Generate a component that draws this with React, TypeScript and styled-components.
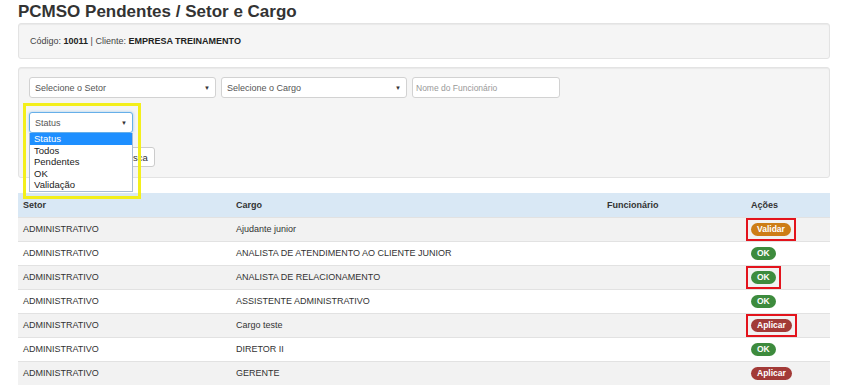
import React from 'react'
import styled, { createGlobalStyle, css } from 'styled-components'

const GlobalStyle = createGlobalStyle`
  * {
    box-sizing: border-box;
  }
  body {
    margin: 0;
    background: #fff;
    color: #333;
    font-family: 'Liberation Sans', Arial, sans-serif;
  }
`

type Tone = 'validar' | 'ok' | 'aplicar'

const tones: Record<Tone, string> = {
  validar: '#cd7d16',
  ok: '#3d8b3d',
  aplicar: '#a23a37',
}

const wellStyle = css`
  background: #f5f5f5;
  border: 1px solid #e3e3e3;
  border-radius: 3px;
  box-shadow: inset 0 1px 1px rgba(0, 0, 0, 0.05);
`

const Page = styled.div`
  width: 849px;
  padding: 2px 19px 0 18px;
`

const Title = styled.h2`
  margin: 0 0 1px;
  font-size: 17px;
  line-height: 20px;
  font-weight: bold;
  color: #333;
`

const InfoWell = styled.div`
  ${wellStyle}
  height: 36px;
  display: flex;
  align-items: center;
  padding: 0 11px;
  font-size: 9px;
  color: #444;

  b {
    color: #222;
  }
`

const FilterWell = styled.div`
  ${wellStyle}
  position: relative;
  margin-top: 8px;
  padding: 9px 10px 10px;
  display: flex;
  flex-direction: column;
`

const FilterRow = styled.div<{ $offset?: number }>`
  display: flex;
  gap: 5px;
  margin-top: ${p => p.$offset ?? 0}px;
`

const SelectBox = styled.div<{ $width: number; $focused?: boolean }>`
  width: ${p => p.$width}px;
  height: 21px;
  display: flex;
  align-items: center;
  justify-content: space-between;
  padding: 0 5px;
  background: #fff;
  border: 1px solid ${p => (p.$focused ? '#66afe9' : '#d2d2d2')};
  border-radius: 3px;
  font-size: 9px;
  color: #555;
  ${p =>
    p.$focused &&
    css`
      box-shadow: 0 0 3px rgba(102, 175, 233, 0.6);
    `}
`

const Arrow = styled.span`
  font-size: 6px;
  color: #333;
`

const TextInput = styled.input`
  width: 148px;
  height: 21px;
  padding: 0 3px;
  border: 1px solid #d2d2d2;
  border-radius: 3px;
  font-family: inherit;
  font-size: 8.5px;
  color: #555;
  outline: none;

  &::placeholder {
    color: #999;
  }
`

const StatusWrap = styled.div`
  position: relative;
  width: 104px;
`

const OptionList = styled.ul`
  position: absolute;
  top: 100%;
  left: 0;
  z-index: 2;
  width: 104px;
  margin: 0;
  padding: 0;
  list-style: none;
  background: #fff;
  border: 1px solid #a9bdd6;
  border-top: none;
`

const Option = styled.li<{ $active?: boolean }>`
  height: 11.6px;
  padding-left: 4px;
  font-size: 9.5px;
  line-height: 11.6px;
  color: ${p => (p.$active ? '#fff' : '#222')};
  background: ${p => (p.$active ? '#1e8fff' : 'transparent')};
`

const SearchButton = styled.button`
  width: 41px;
  height: 20px;
  margin-left: 85px;
  padding: 0;
  background: #fff;
  border: 1px solid #ccc;
  border-radius: 3px;
  font-family: inherit;
  font-size: 9.5px;
  color: #333;
`

const Callout = styled.div`
  position: absolute;
  left: 4px;
  top: 35px;
  z-index: 3;
  width: 118px;
  height: 96px;
  border: 3px solid #f3ef1c;
  pointer-events: none;
`

const Table = styled.table`
  width: 812px;
  margin-top: 15px;
  border-collapse: collapse;
  table-layout: fixed;
  font-size: 9px;
`

const HeadCell = styled.th`
  height: 24px;
  padding: 0 5px;
  text-align: left;
  font-weight: bold;
  color: #333;
  background: #d9e8f5;
`

const Row = styled.tr<{ $striped: boolean }>`
  background: ${p => (p.$striped ? '#f2f2f2' : '#fff')};
`

const Cell = styled.td`
  height: 24px;
  padding: 0 5px;
  border-top: 1px solid #e2e2e2;
  color: #333;
  white-space: nowrap;
`

const Mark = styled.span<{ $on?: boolean }>`
  display: inline-flex;
  margin: -5px;
  padding: 3px;
  border: 2px solid ${p => (p.$on ? '#e3131c' : 'transparent')};
  vertical-align: middle;
`

const Badge = styled.span<{ $tone: Tone }>`
  display: inline-block;
  height: 13px;
  padding: 0 6px;
  border-radius: 7px;
  font-size: 8.5px;
  font-weight: bold;
  line-height: 13px;
  color: #fff;
  background: ${p => tones[p.$tone]};
`

const labels: Record<Tone, string> = {
  validar: 'Validar',
  ok: 'OK',
  aplicar: 'Aplicar',
}

const rows: { cargo: string; tone: Tone; marked?: boolean }[] = [
  { cargo: 'Ajudante junior', tone: 'validar', marked: true },
  { cargo: 'ANALISTA DE ATENDIMENTO AO CLIENTE JUNIOR', tone: 'ok' },
  { cargo: 'ANALISTA DE RELACIONAMENTO', tone: 'ok', marked: true },
  { cargo: 'ASSISTENTE ADMINISTRATIVO', tone: 'ok' },
  { cargo: 'Cargo teste', tone: 'aplicar', marked: true },
  { cargo: 'DIRETOR II', tone: 'ok' },
  { cargo: 'GERENTE', tone: 'aplicar' },
]

const statusOptions = ['Status', 'Todos', 'Pendentes', 'OK', 'Validação']

const App: React.FC = () => (
  <>
    <GlobalStyle />
    <Page>
      <Title>PCMSO Pendentes / Setor e Cargo</Title>
      <InfoWell>
        <span>
          Código: <b>10011</b> | Cliente: <b>EMPRESA TREINAMENTO</b>
        </span>
      </InfoWell>

      <FilterWell>
        <FilterRow>
          <SelectBox $width={187}>
            Selecione o Setor
            <Arrow>▼</Arrow>
          </SelectBox>
          <SelectBox $width={186}>
            Selecione o Cargo
            <Arrow>▼</Arrow>
          </SelectBox>
          <TextInput placeholder="Nome do Funcionário" />
        </FilterRow>
        <FilterRow $offset={14}>
          <StatusWrap>
            <SelectBox $width={104} $focused>
              Status
              <Arrow>▼</Arrow>
            </SelectBox>
            <OptionList>
              {statusOptions.map((o, i) => (
                <Option key={o} $active={i === 0}>
                  {o}
                </Option>
              ))}
            </OptionList>
          </StatusWrap>
        </FilterRow>
        <FilterRow $offset={14}>
          <SearchButton>Busca</SearchButton>
        </FilterRow>
        <Callout />
      </FilterWell>

      <Table>
        <colgroup>
          <col style={{ width: 213 }} />
          <col style={{ width: 371 }} />
          <col style={{ width: 144 }} />
          <col style={{ width: 84 }} />
        </colgroup>
        <thead>
          <tr>
            <HeadCell>Setor</HeadCell>
            <HeadCell>Cargo</HeadCell>
            <HeadCell>Funcionário</HeadCell>
            <HeadCell>Ações</HeadCell>
          </tr>
        </thead>
        <tbody>
          {rows.map((r, i) => (
            <Row key={r.cargo} $striped={i % 2 === 0}>
              <Cell>ADMINISTRATIVO</Cell>
              <Cell>{r.cargo}</Cell>
              <Cell />
              <Cell>
                <Mark $on={r.marked}>
                  <Badge $tone={r.tone}>{labels[r.tone]}</Badge>
                </Mark>
              </Cell>
            </Row>
          ))}
        </tbody>
      </Table>
    </Page>
  </>
)

export default App
